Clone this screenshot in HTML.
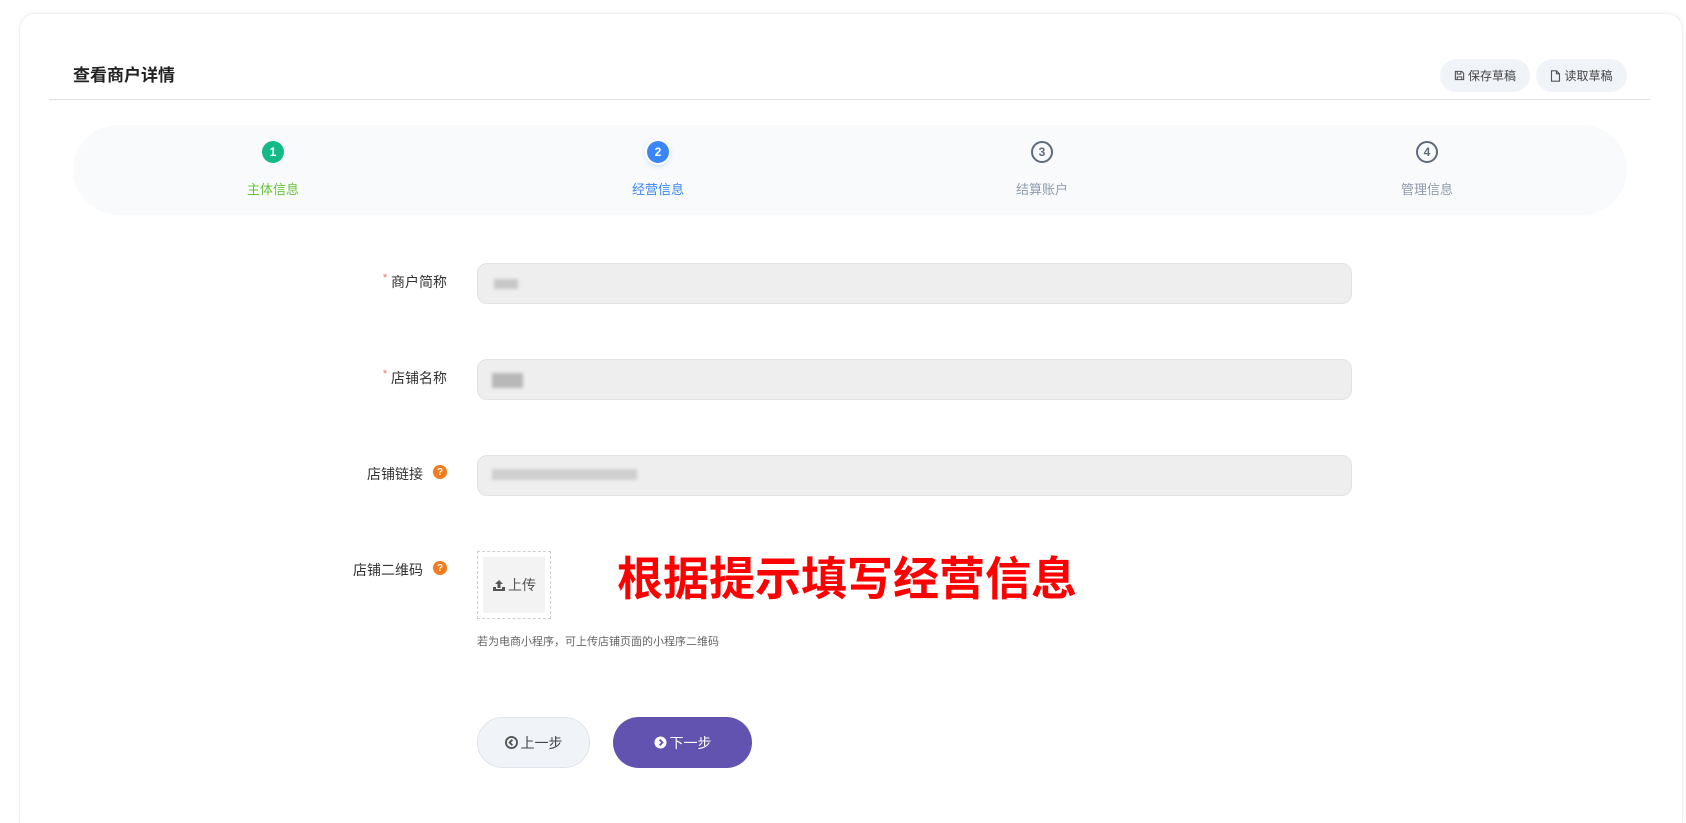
<!DOCTYPE html>
<html style="overflow:hidden;height:823px"><head><meta charset="utf-8"><style>
*{margin:0;padding:0;box-sizing:border-box}
body{width:1686px;height:823px;background:#fff;font-family:"Liberation Sans","Noto Sans CJK SC",sans-serif;position:relative;overflow:hidden;color:#333}
.a{position:absolute}
.card{left:19px;top:13px;width:1664px;height:810px;background:#fff;border:1px solid #f0f1f3;border-bottom:none;border-radius:16px 16px 0 0;box-shadow:0 0 6px rgba(0,0,0,.05)}
.btn{background:#f0f3f8;border-radius:17px;font-size:12px;color:#444;display:flex;align-items:center;justify-content:center;gap:3px}
.circ{width:22px;height:22px;border-radius:50%;font-size:12px;font-weight:bold;display:flex;align-items:center;justify-content:center;transform:translate(-50%,-50%)}
.lbl{font-size:13px;transform:translateX(-50%);white-space:nowrap}
.fl{font-size:14px;color:#333;text-align:right;width:200px}
.inp{left:477px;width:875px;height:41px;background:#eeeeee;border:1px solid #e0e2e6;border-radius:10px}
.q{width:14px;height:14px;border-radius:50%;background:#f47a1f;color:#fff;font-size:10px;font-weight:bold;display:flex;align-items:center;justify-content:center}
.blur{background:#c8c8c8;filter:blur(1.5px)}
</style></head><body>
<div class="a card"></div>
<div class="a" style="left:73px;top:61px;font-size:17px;font-weight:bold;color:#222">查看商户详情</div>
<div class="a" style="left:49px;top:99px;width:1601px;height:1px;background:#dedfe3"></div>
<div class="a btn" style="left:1440px;top:59px;width:90px;height:33px"><svg width="11" height="11" viewBox="0 0 12 12"><path d="M1.5 1.5h7l2 2v7h-9z M3.5 1.5v3h4v-3 M3.5 10.5v-3h5v3" fill="none" stroke="#555" stroke-width="1.2"/></svg>保存草稿</div>
<div class="a btn" style="left:1536px;top:59px;width:91px;height:33px"><svg width="11" height="12" viewBox="0 0 11 12"><path d="M1.5 .8h5l3 3v7.4h-8z M6.5 .8v3h3" fill="none" stroke="#555" stroke-width="1.1"/></svg>读取草稿</div>
<div class="a" style="left:73px;top:125px;width:1554px;height:90px;background:#f8fafc;border-radius:45px"></div>
<div class="a circ" style="left:273px;top:152px;background:#13b987;color:#fff">1</div>
<div class="a circ" style="left:658px;top:152px;background:#3b86f6;color:#fff;box-shadow:0 0 0 2px #fff,0 2px 6px rgba(59,134,246,.4)">2</div>
<div class="a circ" style="left:1042px;top:152px;border:2px solid #5f6b7c;color:#5f6b7c">3</div>
<div class="a circ" style="left:1427px;top:152px;border:2px solid #5f6b7c;color:#5f6b7c">4</div>
<div class="a lbl" style="left:273px;top:179px;color:#67c23a">主体信息</div>
<div class="a lbl" style="left:658px;top:179px;color:#3b86f6">经营信息</div>
<div class="a lbl" style="left:1042px;top:179px;color:#909aab">结算账户</div>
<div class="a lbl" style="left:1427px;top:179px;color:#909aab">管理信息</div>

<div class="a fl" style="left:247px;top:272px"><span style="color:#f56c6c;font-size:11px;vertical-align:top">*</span> 商户简称</div>
<div class="a inp" style="top:263px"></div>
<div class="a blur" style="left:494px;top:279px;width:24px;height:10px"></div>
<div class="a fl" style="left:247px;top:368px"><span style="color:#f56c6c;font-size:11px;vertical-align:top">*</span> 店铺名称</div>
<div class="a inp" style="top:359px"></div>
<div class="a blur" style="left:492px;top:373px;width:31px;height:15px;background:#b8b8b8"></div>
<div class="a fl" style="left:223px;top:464px">店铺链接</div>
<div class="a q" style="left:433px;top:465px">?</div>
<div class="a inp" style="top:455px"></div>
<div class="a blur" style="left:492px;top:469px;width:145px;height:11px;background:#cfcfcf"></div>
<div class="a fl" style="left:223px;top:560px">店铺二维码</div>
<div class="a q" style="left:433px;top:561px">?</div>
<div class="a" style="left:477px;top:551px;width:74px;height:68px;border:1px dashed #cfcfcf"></div>
<div class="a" style="left:483px;top:557px;width:62px;height:56px;background:#f3f3f3;display:flex;align-items:center;justify-content:center;font-size:14px;color:#555;gap:2px"><svg width="14" height="13" viewBox="0 0 14 13"><path d="M7 1l4 4H8.5v4h-3V5H3z M1 8h3v2h6V8h3v4H1z" fill="#555"/></svg>上传</div>
<div class="a" style="left:477px;top:633px;font-size:11px;color:#666">若为电商小程序，可上传店铺页面的小程序二维码</div>
<div class="a" style="left:617px;top:543px;font-size:46px;font-weight:bold;color:#ff0000;white-space:nowrap">根据提示填写经营信息</div>

<div class="a" style="left:477px;top:717px;width:113px;height:51px;border-radius:26px;background:#f0f3f8;border:1px solid #e0e4ea;display:flex;align-items:center;justify-content:center;font-size:14px;color:#444;gap:3px"><svg width="13" height="13" viewBox="0 0 14 14"><circle cx="7" cy="7" r="6" fill="none" stroke="#555" stroke-width="2"/><path d="M8 4L5 7l3 3" fill="none" stroke="#555" stroke-width="2"/></svg>上一步</div>
<div class="a" style="left:613px;top:717px;width:139px;height:51px;border-radius:26px;background:#6353b0;display:flex;align-items:center;justify-content:center;font-size:14px;color:#fff;gap:3px"><svg width="13" height="13" viewBox="0 0 14 14"><circle cx="7" cy="7" r="6.5" fill="#fff"/><path d="M6 4l3 3-3 3" fill="none" stroke="#6353b0" stroke-width="2"/></svg>下一步</div>
</body></html>
